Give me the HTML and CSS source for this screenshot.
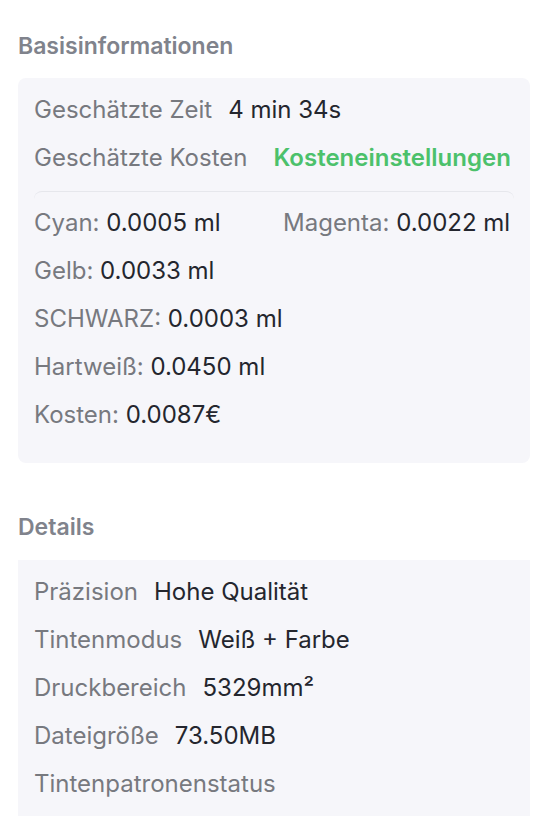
FILE: index.html
```html
<!DOCTYPE html>
<html lang="de">
<head>
<meta charset="utf-8">
<link rel="stylesheet" href="styles.css">
</head>
<body>
<section class="section">
  <h2 class="section-title">Basisinformationen</h2>
  <div class="card card-rounded">
    <div class="row"><span class="label">Geschätzte Zeit</span><span class="value">4 min 34s</span></div>
    <div class="row"><span class="label">Geschätzte Kosten</span><span class="link">Kosteneinstellungen</span></div>
    <div class="ink-box">
      <div class="ink-grid">
        <div class="ink"><span class="label">Cyan:</span> <span class="value">0.0005 ml</span></div>
        <div class="ink"><span class="label">Magenta:</span> <span class="value">0.0022 ml</span></div>
        <div class="ink"><span class="label">Gelb:</span> <span class="value">0.0033 ml</span></div>
        <div class="ink"></div>
        <div class="ink"><span class="label">SCHWARZ:</span> <span class="value">0.0003 ml</span></div>
        <div class="ink"></div>
        <div class="ink"><span class="label">Hartweiß:</span> <span class="value">0.0450 ml</span></div>
        <div class="ink"></div>
        <div class="ink"><span class="label">Kosten:</span> <span class="value">0.0087€</span></div>
      </div>
    </div>
  </div>
</section>
<section class="section section-details">
  <h2 class="section-title">Details</h2>
  <div class="card card-square">
    <div class="row"><span class="label">Präzision</span><span class="value">Hohe Qualität</span></div>
    <div class="row"><span class="label">Tintenmodus</span><span class="value">Weiß + Farbe</span></div>
    <div class="row"><span class="label">Druckbereich</span><span class="value">5329mm²</span></div>
    <div class="row"><span class="label">Dateigröße</span><span class="value">73.50MB</span></div>
    <div class="row"><span class="label">Tintenpatronenstatus</span></div>
  </div>
</section>
</body>
</html>
```
FILE: styles.css
```css
* { box-sizing: border-box; }
html, body { margin: 0; padding: 0; background: #ffffff; }
body {
  font-family: Inter, "Noto Sans", sans-serif;
  padding: 0 22px 0 18px;
  overflow: hidden;
  height: 816px;
}
.section { padding-top: 32px; }
.section-details { padding-top: 50px; }
.section-title {
  margin: 0 0 18px 0;
  font-size: 23px;
  line-height: 28px;
  font-weight: 600;
  color: #80838c;
}
.section-details .section-title { margin-bottom: 19px; }
.card {
  background: #f6f6fa;
  padding: 16px 16px 32px 16px;
}
.card-rounded { border-radius: 8px; }
.card-square { border-radius: 0; padding-bottom: 40px; }
.row {
  display: flex;
  align-items: center;
  font-size: 24px;
  line-height: 32px;
  margin-bottom: 16px;
  white-space: nowrap;
}
.row:last-child { margin-bottom: 0; }
.label { color: #77797f; }
.value { color: #24262e; }
.row .value { margin-left: 16px; }
.link {
  margin-left: 26px;
  color: #4cc16b;
  font-weight: 600;
}
.ink-box {
  margin-top: 17px;
  border-top: 1px solid #e6e7ec;
  border-radius: 8px 8px 0 0;
  padding-top: 15px;
}
.ink-grid {
  display: grid;
  grid-template-columns: minmax(0, 1fr) minmax(0, 1fr);
  column-gap: 18px;
  row-gap: 16px;
}
.ink {
  font-size: 24px;
  line-height: 32px;
  min-height: 32px;
  white-space: nowrap;
}
```
